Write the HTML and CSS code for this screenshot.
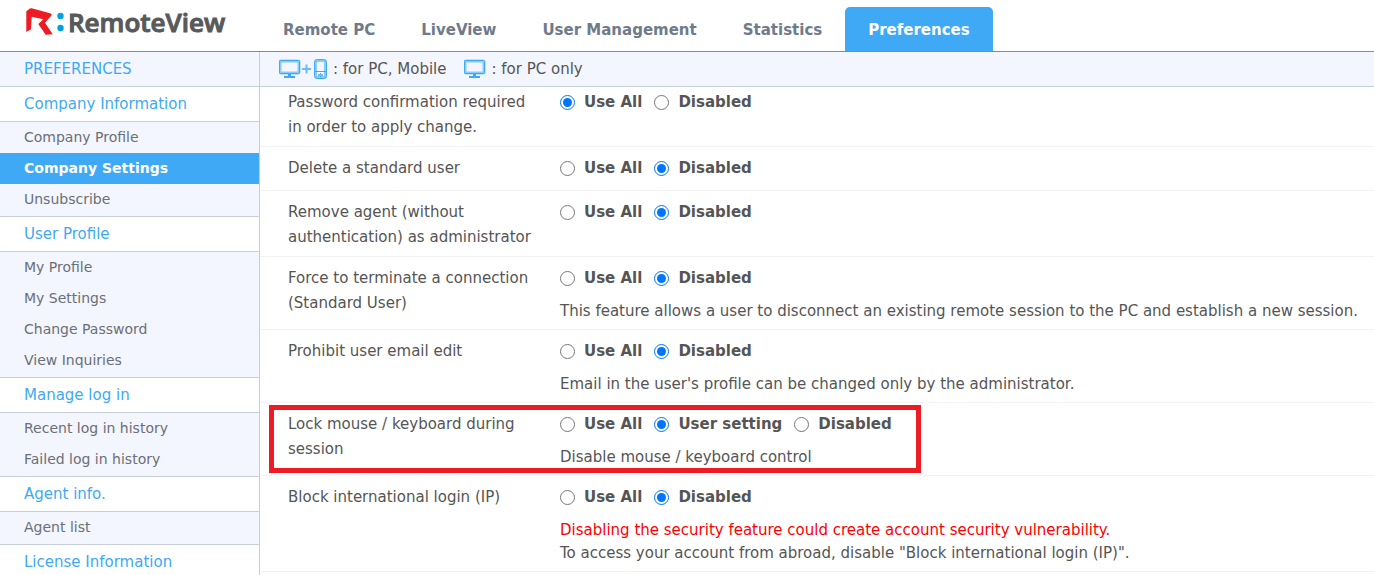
FILE: index.html
```html
<!DOCTYPE html>
<html lang="en">
<head>
<meta charset="UTF-8">
<meta name="viewport" content="width=device-width, initial-scale=1.0">
<title>RemoteView - Company Settings</title>
<link rel="stylesheet" href="styles.css">
</head>
<body>
<header class="header">
    <a href="#" class="logo">
        <svg class="logo-mark" width="40" height="28" viewBox="0 0 40 28" aria-hidden="true">
            <path fill="#ed1c24" d="M0.300 3.200 L4 0.400 Q4.700 0 5.600 0.300 L24 5.200 Q26.700 6 25 8 L19 14.700 L26.700 26.300 L19.700 26.700 L12.300 16 L17.300 11.300 L5.700 8.700 L5 21.300 L0.300 24 Z"/>
            <circle cx="34.500" cy="8" r="3.200" fill="#00a0e9"/>
            <circle cx="34.500" cy="20" r="3.200" fill="#00a0e9"/>
        </svg>
        <span class="logo-text">RemoteView</span>
    </a>
    <nav class="nav">
        <a href="#">Remote PC</a>
        <a href="#">LiveView</a>
        <a href="#">User Management</a>
        <a href="#">Statistics</a>
        <a href="#" class="active">Preferences</a>
    </nav>
</header>

<div class="page">
    <aside class="sidebar">
        <h1 class="sidebar-title">PREFERENCES</h1>
        <h2><a href="#">Company Information</a></h2>
        <ul>
            <li><a href="#">Company Profile</a></li>
            <li><a href="#" class="active">Company Settings</a></li>
            <li><a href="#">Unsubscribe</a></li>
        </ul>
        <h2><a href="#">User Profile</a></h2>
        <ul>
            <li><a href="#">My Profile</a></li>
            <li><a href="#">My Settings</a></li>
            <li><a href="#">Change Password</a></li>
            <li><a href="#">View Inquiries</a></li>
        </ul>
        <h2><a href="#">Manage log in</a></h2>
        <ul>
            <li><a href="#">Recent log in history</a></li>
            <li><a href="#">Failed log in history</a></li>
        </ul>
        <h2><a href="#">Agent info.</a></h2>
        <ul>
            <li><a href="#">Agent list</a></li>
        </ul>
        <h2><a href="#">License Information</a></h2>
    </aside>

    <main class="content">
        <div class="legend-bar">
            <span class="legend-item">
                <svg width="49" height="20" viewBox="0 0 49 20" fill="none" stroke="#3fa9f5" aria-hidden="true">
                    <rect x="1" y="2" width="19" height="12" rx="1" stroke="#8bcbfa" stroke-width="3"/>
                    <rect x="0.500" y="1.500" width="20" height="13" rx="1"/>
                    <path d="M10.500 15v3" stroke-width="3"/>
                    <path d="M5 18h11" stroke-width="2"/>
                    <path d="M23 10h9M27.500 5.500v9" stroke="#6bbcf7" stroke-width="2"/>
                    <rect x="36.500" y="1.500" width="10" height="17" rx="2" stroke="#8bcbfa" stroke-width="3"/>
                    <rect x="35.500" y="0.500" width="12" height="19" rx="3"/>
                    <path d="M36 12.500h11M41.500 14v4" stroke-width="1"/>
                    <path d="M39 16h5" stroke="#6bbcf7" stroke-width="2"/>
                </svg>
                : for PC, Mobile
            </span>
            <span class="legend-item">
                <svg width="22" height="20" viewBox="0 0 22 20" fill="none" stroke="#3fa9f5" aria-hidden="true">
                    <rect x="1" y="2" width="19" height="12" rx="1" stroke="#8bcbfa" stroke-width="3"/>
                    <rect x="0.500" y="1.500" width="20" height="13" rx="1"/>
                    <path d="M10.500 15v3" stroke-width="3"/>
                    <path d="M5 18h11" stroke-width="2"/>
                </svg>
                : for PC only
            </span>
        </div>

        <table class="settings">
            <tr>
                <th scope="row">Password confirmation required in order to apply change.</th>
                <td>
                    <div class="options">
                        <label><input type="radio" name="password" checked>Use All</label>
                        <label><input type="radio" name="password">Disabled</label>
                    </div>
                </td>
            </tr>
            <tr>
                <th scope="row">Delete a standard user</th>
                <td>
                    <div class="options">
                        <label><input type="radio" name="deleteUser">Use All</label>
                        <label><input type="radio" name="deleteUser" checked>Disabled</label>
                    </div>
                </td>
            </tr>
            <tr>
                <th scope="row">Remove agent (without authentication) as administrator</th>
                <td>
                    <div class="options">
                        <label><input type="radio" name="removeAgent">Use All</label>
                        <label><input type="radio" name="removeAgent" checked>Disabled</label>
                    </div>
                </td>
            </tr>
            <tr>
                <th scope="row">Force to terminate a connection (Standard User)</th>
                <td>
                    <div class="options">
                        <label><input type="radio" name="terminate">Use All</label>
                        <label><input type="radio" name="terminate" checked>Disabled</label>
                    </div>
                    <p>This feature allows a user to disconnect an existing remote session to the PC and establish a new session.</p>
                </td>
            </tr>
            <tr>
                <th scope="row">Prohibit user email edit</th>
                <td>
                    <div class="options">
                        <label><input type="radio" name="emailEdit">Use All</label>
                        <label><input type="radio" name="emailEdit" checked>Disabled</label>
                    </div>
                    <p>Email in the user's profile can be changed only by the administrator.</p>
                </td>
            </tr>
            <tr class="highlight">
                <th scope="row">Lock mouse / keyboard during session</th>
                <td>
                    <div class="options">
                        <label><input type="radio" name="lockInput">Use All</label>
                        <label><input type="radio" name="lockInput" checked>User setting</label>
                        <label><input type="radio" name="lockInput">Disabled</label>
                    </div>
                    <p>Disable mouse / keyboard control</p>
                </td>
            </tr>
            <tr>
                <th scope="row">Block international login (IP)</th>
                <td>
                    <div class="options">
                        <label><input type="radio" name="blockIp">Use All</label>
                        <label><input type="radio" name="blockIp" checked>Disabled</label>
                    </div>
                    <p><span class="warning">Disabling the security feature could create account security vulnerability.</span><br>To access your account from abroad, disable "Block international login (IP)".</p>
                </td>
            </tr>
        </table>
    </main>
</div>
</body>
</html>
```
FILE: styles.css
```css
* {
    box-sizing: border-box;
}
body {
    margin: 0;
    font-family: Verdana, "DejaVu Sans", sans-serif;
    font-size: 15px;
    color: #555;
    background-color: #fff;
}
a {
    text-decoration: none;
    color: inherit;
}

/* header */
.header {
    display: flex;
    align-items: flex-end;
    height: 52px;
    border-bottom: 1px solid #3fa0de;
}
.logo {
    display: flex;
    align-items: center;
    width: 260px;
    height: 51px;
    padding: 0 0 7px 26px;
}
.logo-text {
    margin-left: 2px;
    font-family: "Open Sans", "Noto Sans", sans-serif;
    font-size: 26px;
    font-weight: 600;
    line-height: 44px;
    color: #58595b;
    -webkit-text-stroke: 1px #58595b;
}
.nav {
    display: flex;
}
.nav a {
    padding: 0 23px;
    height: 44px;
    line-height: 46px;
    font-weight: bold;
    color: #6f7a8a;
    white-space: nowrap;
}
.nav a.active {
    color: #fff;
    background-color: #3fa9f5;
    border-radius: 5px 5px 0 0;
}

.page {
    display: flex;
}

/* left menu */
.sidebar {
    flex: 0 0 260px;
    border-right: 1px solid #c8ced8;
}
.sidebar h1,
.sidebar h2 {
    margin: 0;
    padding-left: 24px;
    font-size: 15px;
    font-weight: normal;
    line-height: 34px;
    color: #3fa9f5;
    border-bottom: 1px solid #c8ced8;
}
.sidebar-title {
    background-color: #f3f6fe;
}
.sidebar ul {
    margin: 0;
    padding: 0 0 1px;
    list-style: none;
    background-color: #f3f6fe;
    border-bottom: 1px solid #c8ced8;
}
.sidebar li a {
    display: block;
    padding-left: 24px;
    font-size: 14px;
    line-height: 31px;
    color: #6b6f76;
}
.sidebar li a.active {
    font-weight: bold;
    color: #fff;
    background-color: #3fa9f5;
}

/* settings */
.content {
    flex: 1;
    min-width: 0;
}
.legend-bar {
    display: flex;
    gap: 18px;
    height: 35px;
    padding-left: 19px;
    background-color: #f3f6fe;
    border-bottom: 1px solid #c8ced8;
}
.legend-item {
    display: flex;
    align-items: center;
    gap: 5px;
}
.settings {
    width: 100%;
    border-collapse: separate;
    border-spacing: 0;
}
.settings th,
.settings td {
    padding: 9px 0 6px;
    vertical-align: top;
    text-align: left;
    line-height: 25px;
    border-bottom: 1px solid #f2f3f6;
}
.settings tr:first-child th,
.settings tr:first-child td {
    padding-top: 3px;
}
.settings th {
    width: 300px;
    padding-left: 28px;
    padding-right: 20px;
    font-weight: normal;
}
.options {
    display: flex;
    gap: 12px;
    padding-bottom: 3px;
    font-weight: bold;
}
.options label {
    display: flex;
    align-items: center;
    gap: 9px;
}
.options input {
    width: 15px;
    height: 15px;
    margin: 0;
}
.settings p {
    margin: 6px 0 0;
    line-height: 23px;
}
.warning {
    color: #f00;
}

/* red frame round the row */
.highlight {
    position: relative;
}
.highlight::after {
    content: "";
    position: absolute;
    top: 2px;
    bottom: 3px;
    left: 9px;
    width: 642px;
    border: 5px solid #ed1c24;
    pointer-events: none;
}
```
